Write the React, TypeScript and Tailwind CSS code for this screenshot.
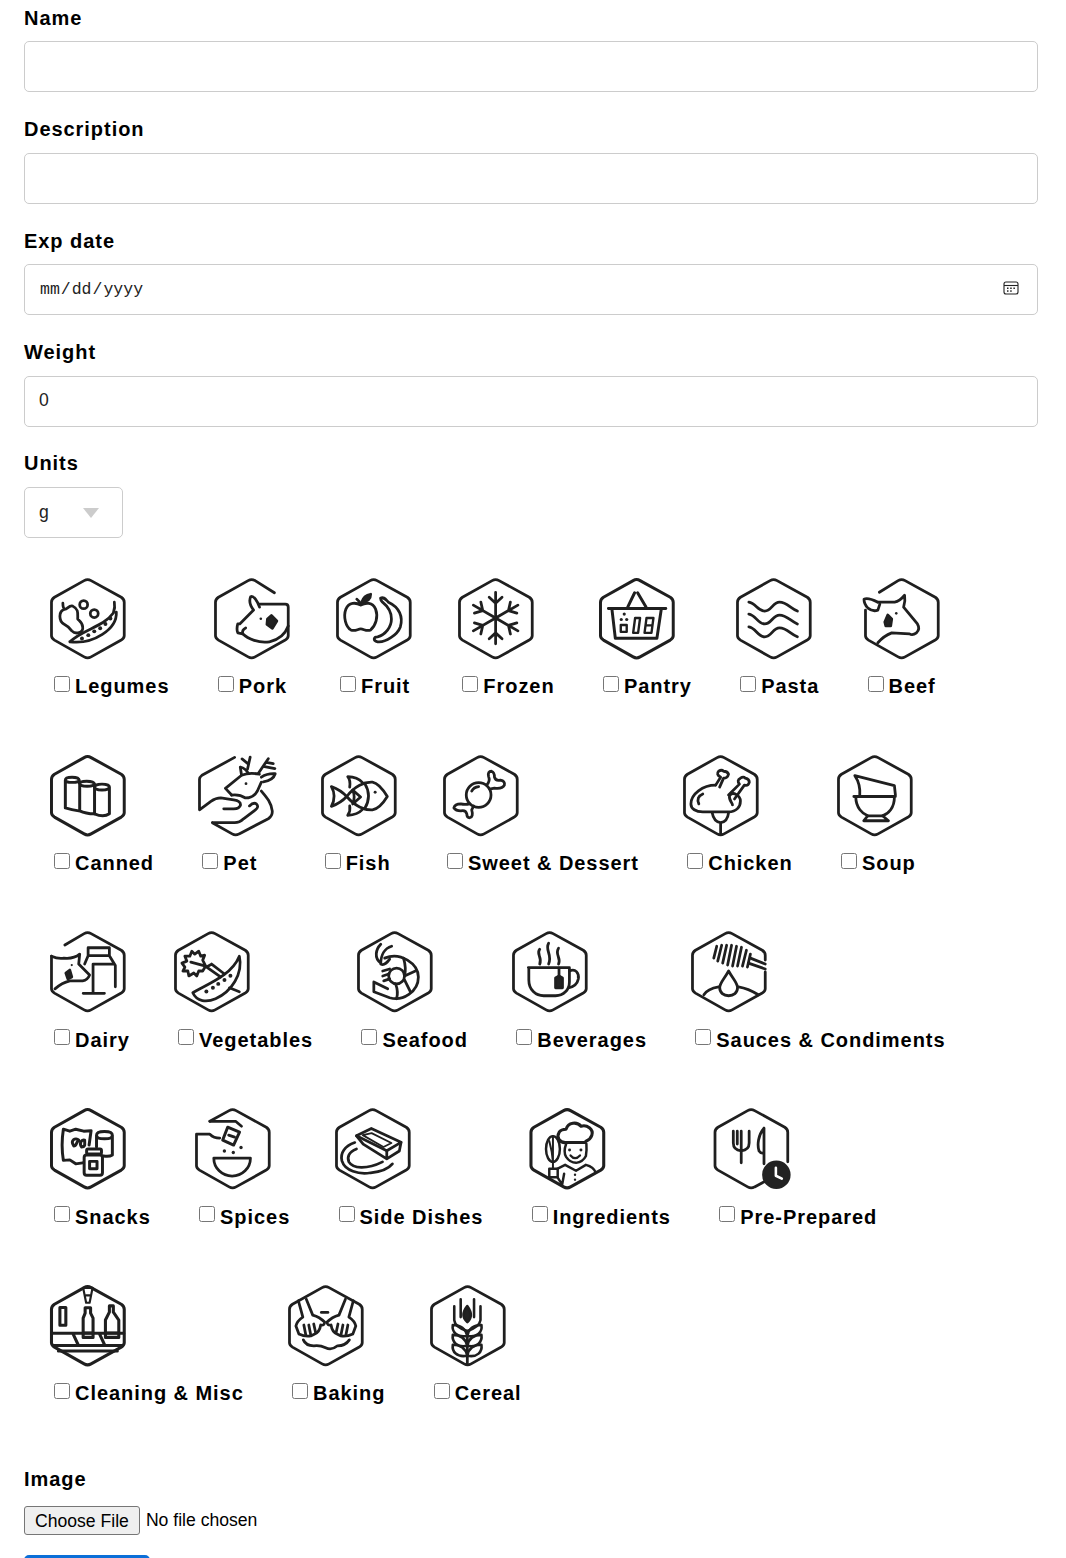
import React from "react";

const HEX = "M34.5 3.2 Q38 1.2 41.5 3.2 L72 20 Q75 22 75 25 V59 Q75 61.5 72 63.3 L41.5 80.3 Q38 82.3 34.5 80.3 L4.5 63.3 Q1.5 61.5 1.5 59 V25 Q1.5 22 4.5 20 Z";

function Ico({ hex = HEX, w = 2.8, dx = 0, children }: { hex?: string; w?: number; dx?: number; children: React.ReactNode }) {
  return (
    <svg width="78" height="84" viewBox={`${dx} -0.4 78.8 84.8`} fill="none" stroke="#1f1f1f" strokeWidth={w} strokeLinecap="round" strokeLinejoin="round" className="block overflow-visible">
      <path d={hex} />
      {children}
    </svg>
  );
}
const Dots = ({ p, r = 2 }: { p: number[][]; r?: number }) => (
  <g fill="#222" stroke="none">
    {p.map(([x, y], i) => (
      <circle key={i} cx={x} cy={y} r={r} />
    ))}
  </g>
);

const icons: Record<string, React.ReactNode> = {
  Legumes: (
    <Ico>
      <circle cx="34" cy="27.5" r="4" />
      <circle cx="44.7" cy="36.5" r="4" />
      <path d="M13 26 Q13 31 15 32 C8 34 9 44 14 47 C18 49 19 50 22 54 C26 58 34 56 33 50 C33 46 30 44 28 42 C28 36 29 32 23 29 C20 28 18 31 16 32" />
      <path d="M20 65 C34 52 54 50 64 36 Q66 30 65 25 M20 65 C44 68 68 52 67 35" />
      <Dots p={[[32.3, 61.7], [38.7, 58.3], [44.7, 54.5], [50.7, 51.3], [56, 47], [61, 41.5]]} />
    </Ico>
  ),
  Pork: (
    <Ico hex="M61 15.5 L41.5 3.2 Q38 1.2 34.5 3.2 L4.5 20 Q1.5 22 1.5 25 V59 Q1.5 61.5 4.5 63.3 L34.5 80.3 Q38 82.3 41.5 80.3 L72 63.3 Q75 61.5 75 59 V30 Q75 27 72 27 H46">
      <path d="M46 30 C44 24 40 18 37 19.5 C35 24 37 29 40 33 L26 47 H24 Q22.5 52 24 56 L29 57 C34 62 46 67 56 65 C65 63 72 57 75 49" />
      <path d="M29 57 Q28 53 32 51" />
      <circle cx="47.3" cy="41.7" r="1.3" fill="#222" stroke="none" />
      <path d="M58 38.5 L63.5 44 L59 51.5 L53.5 47.5 L54 42 Z" fill="#222" />
    </Ico>
  ),
  Fruit: (
    <Ico>
      <path d="M25 28 C20 25 13 25 10 32 C7 40 10 50 15 53 C19 55 22 52 25 52 C28 52 31 55 35 53 C40 49 43 40 40 32 C37 25 30 25 25 28 Z M25 28 Q24 24 21 22" />
      <path d="M26 25 Q28 18 35 17 Q35 24 26 25 Z" fill="#222" />
      <path d="M45 21 C48 19 50 22 53 25 C64 30 68 40 65 50 C62 58 50 66 42 65 C37 64 38 60 42 60 C50 58 56 50 56 42 C56 34 52 29 47 25 Q45 23 45 21 Z" />
    </Ico>
  ),
  Frozen: (
    <Ico>
      {[0, 60, 120, 180, 240, 300].map((a) => (
        <g key={a} transform={`rotate(${a} 38 41)`}>
          <path d="M38 41 V15 M31.5 20 L38 26 L44.5 20" strokeWidth="2.8" />
        </g>
      ))}
    </Ico>
  ),
  Pantry: (
    <Ico w={3}>
      <path d="M9.5 31.5 H67.5 M13 31.5 L16.5 61.5 H58.5 L63 31.5 M29 30 L36 15.5 M47.5 30 L39 15.5" />
      <rect x="22" y="48" width="6" height="7" strokeWidth="2.4" />
      <path d="M36.5 41 L41.5 41 L39.5 56 L34.5 56 Z" strokeWidth="2.4" />
      <path d="M48 41 L55 41 L53 56 L46 56 Z M47 48.5 H54" strokeWidth="2.4" />
      <Dots p={[[25.5, 37], [22.5, 42.5], [28, 42.5]]} r={1.6} />
    </Ico>
  ),
  Pasta: (
    <Ico>
      <path d="M13 25 C20 26 22 34 29 34 C36 34 37 25 44 25 C51 25 55 31 62 34" />
      <path d="M13 37 C20 38 22 47 29 47 C36 47 37 38 44 38 C51 38 55 44 62 47" />
      <path d="M13 50 C20 51 22 60 29 60 C36 60 37 51 44 51 C51 51 55 57 62 60" />
    </Ico>
  ),
  Beef: (
    <Ico hex="M15.5 15 L34.5 3.2 Q38 1.2 41.5 3.2 L72 20 Q75 22 75 25 V59 Q75 61.5 72 63.3 L41.5 80.3 Q38 82.3 34.5 80.3 L4.5 63.3 Q1.5 61.5 1.5 59 V33">
      <path d="M14 25 H31 Q36 24 41 18 Q42 24 40 30 L54 47 Q57 52 53 56 Q49 59 46 57 L28 56 Q20 59 14 66" />
      <path d="M14 25 Q4 20 0 22 Q0 27 4 31 Q9 35 14 33 L16 27" />
      <circle cx="32.6" cy="36.3" r="1.3" fill="#222" stroke="none" />
      <path d="M24 38 L28 42 L27 49 L22 49 L21 45 Z" fill="#222" />
    </Ico>
  ),
  Canned: (
    <Ico w={3}>
      <path d="M15.5 26 C15.5 22 29 22 29.5 26 C29.5 29 15.5 29 15.5 26 V54 Q22 56 29 57 M29.5 26 V29" />
      <path d="M30 30 C30 26 44 26 45 30 C45 33 30 33 30 30 V57 Q36 60 45 60 V30" />
      <path d="M45 33 C45 29 60 29 60 33 C60 37 45 37 45 33 M60 33 V60 Q54 64 45 60" />
    </Ico>
  ),
  Pet: (
    <Ico hex="M37 3 L4 21 Q1.5 23 1.5 25 V56 L13 47.5 Q18 44 23 44 L36 46 Q43 47 43 51 Q42 55 36 55 L26 55 M14.5 69 H37 Q42 69 46 65 L58 56 Q62 53 59 50 Q56 48 52 52 M14.5 69 L34.5 80.3 Q38 82.3 41.5 80.3 L71 65 Q75.5 62 75 57 C74 49 70 44 64 37">
      <path d="M34 41 L27.7 34.3 L44 21 Q52 18 62 20" />
      <path d="M34 41 Q42 40 48 44 Q56 44 60 37 L64 28" />
      <path d="M44 21 L42.7 12.7 Q48 14 51 19.3" />
      <path d="M64 23 Q70 19 78 19.5 Q76 26 66 27.7" />
      <path d="M50 15 L52.7 2.7 M50 9 L44.5 4.5 M61 19 L71 4.3 M66 12 L77.7 14.3 M69 8 L76 9.3" />
      <circle cx="48.5" cy="29.5" r="1.4" fill="#222" stroke="none" />
    </Ico>
  ),
  Fish: (
    <Ico>
      <path d="M26 42.5 C34 32 44 27.5 52 28 C58 29 63 36 67 42.5 C63 49 58 55 52 56 C44 56.5 34 52 26 42.5 Z" />
      <path d="M26 42.5 Q20 36 10.5 32.5 Q16 42 10.5 52.5 Q20 49 26 42.5" />
      <path d="M29 33 Q30 26 27 22.5 Q37 23 42 28.5 M29 52 Q30 57 27 61.5 Q37 61 42 55.5" />
      <path d="M44 29 Q52 42 44 55" />
      <path d="M32 36 L40 43 L32 50 Q35 43 32 36 Z" />
      <circle cx="54.7" cy="38.3" r="1.5" fill="#222" stroke="none" />
    </Ico>
  ),
  "Sweet & Dessert": (
    <Ico>
      <circle cx="36" cy="41" r="12.5" />
      <path d="M29 37 Q31 33 36 32.5" />
      <path d="M44 31 Q48 27 46 22 Q45 17 49 17 Q52 18 52 23 Q53 27 58 26 Q63 27 62 31 Q60 35 52 34 L47 35" />
      <path d="M27 50 Q22 51 18 50 Q12 50 11 54 Q13 57 18 57 Q23 56 24 60 Q24 64 27 64 Q31 63 29 56 L31 52" />
    </Ico>
  ),
  Chicken: (
    <Ico>
      <path d="M8 50 C8 40 20 31 33 31 M8 50 C8 55 13 58 20 58 H46 C54 58 58 53 58 47 C58 42 50 36 47 42 C46 46 50 49 50 51" />
      <path d="M16 50 Q13 43 20 40" />
      <path d="M33 31 L38 23 Q33 20 36 17 Q39 15 41 17 Q45 17 46 20 Q45 24 41 24 L37 33" />
      <path d="M46 41 L57 30 Q54 26 58 24 Q61 22 63 24 Q67 25 67 28 Q66 32 62 31 L52 45" />
      <path d="M29.5 59 Q31 68 38 69 Q45 68 46 59 M38 69 V80" />
    </Ico>
  ),
  Soup: (
    <Ico>
      <path d="M18 21.5 L58 31.5 L59 41 M18 21.5 Q24 30 23 42" />
      <path d="M17 42.5 H59 M19 43 C19 54 26 60 31 62 H46 C52 60 58 54 58 43" />
      <path d="M31 62 L27 67 H52 L46 62" />
    </Ico>
  ),
  Dairy: (
    <Ico hex="M15 14.7 L34.5 3.2 Q38 1.2 41.5 3.2 L72 20 Q75 22 75 25 V59 Q75 61.5 72 63.3 L41.5 80.3 Q38 82.3 34.5 80.3 L4.5 63.3 Q1.5 61.5 1.5 59 V26">
      <path d="M1.5 26 Q8 29 14 28 Q24 29 30 24 L29 34 L40 45 Q38 50 33 51 L20 51 Q12 53 5 59" />
      <path d="M16 43 L20 40 L22 47 L18 49 Z" fill="#222" />
      <circle cx="22" cy="35" r="1.1" fill="#222" stroke="none" />
      <path d="M38.5 25.5 V17.5 H60 V25.5 H38.5 L35 34 M60 25.5 L66 35.5 V57 M43.5 34 V62.5 M33.5 63.5 H55 M43.5 34 H65" />
    </Ico>
  ),
  Vegetables: (
    <Ico>
      <path d="M19 63 C32 55 58 46 66 26 C70 44 58 62 42 69 C33 73 23 72 19 63 Z" />
      <Dots p={[[32.7, 61.7], [39.3, 58], [44.7, 54], [51, 50], [57, 45.7]]} />
      <path d="M56 58 L66 62" />
      <path d="M33 37 L47 47 M38 34 L51 44 M33 37 L38 34" />
      <path d="M32 36 L29 30 L31 25 L27 26 L25 21 L21 24 L18 21 L16 26 L11 26 L13 31 L8 33 L11 37 L9 41 L14 41 L15 46 L20 43 L23 46 L25 41 L29 41 Z M17 32 L32 36" />
    </Ico>
  ),
  Seafood: (
    <Ico>
      <path d="M28 28 C44 21 62 34 62 47 C62 62 46 72 33 68 L17 62 V52 L31 59" />
      <circle cx="40" cy="46" r="8" />
      <path d="M24 33 C17 28 19 19 24 14 M24 34 C24 25 28 18 35 16 M24 34 Q28 36 33 29" />
      <path d="M26 41 L33 39 M26 46 L32 44 M27 51 L33 49 M47 28 Q50 38 48 46 M59 41 L48 46 M39 54 Q42 62 40 69 M48 50 L54 62" />
    </Ico>
  ),
  Beverages: (
    <Ico>
      <path d="M16.5 37.5 H58 M17 38 V50 C17 60 24 66 32 66 H44 C52 66 58 60 58 52 V38" />
      <path d="M58 41 C64 38 68 43 67 49 C66 54 62 57 57 58" />
      <path d="M28 19 C24 24 31 27 28 34 M37 13 C33 20 41 24 37 34 M47 18 C43 24 50 28 47 34" />
      <path d="M47.5 38 V47" />
      <path d="M44 48 L47.5 46 L51 48 V58 H44 Z" fill="#222" />
    </Ico>
  ),
  "Sauces & Condiments": (
    <Ico hex="M75 30 V25 Q75 22 72 20 L41.5 3.2 Q38 1.2 34.5 3.2 L4.5 20 Q1.5 22 1.5 25 V59 Q1.5 61.5 4.5 63.3 L34.5 80.3 Q38 82.3 41.5 80.3 L72 63.3 Q75 61.5 75 59 V42">
      <path d="M26 16 L23 28 M31 15 L27 31 M36 15 L32 33 M41 15 L37 35 M46 16 L42 36 M51 17 L47 36 M56 20 L52 36 M60 24 L57 37" />
      <path d="M60 28 L75 34 M58 33 L75 39" />
      <path d="M38 41 C33 50 29 53 29 58 C29 63 33 66 38 66 C43 66 47 63 47 58 C47 53 43 50 38 41 Z" />
      <path d="M13 65 C16 60 22 58 28 57 M48 57 C54 58 60 60 68 65" />
    </Ico>
  ),
  Snacks: (
    <Ico w={3}>
      <path d="M13.5 22 L20 24 L26 22 L34 24 L41.5 23.5 L39.5 38 M13.5 22 Q11 38 13.5 53.5 L20 53 L26 57 L33 56" />
      <path d="M24 39 C20 33 26 30 29 33 C26 36 27 39 24 39 Z M32 40 C29 36 32 32 35 33 C35 37 36 40 32 40 Z" />
      <path d="M47 28 C47 23 63 23 63 28 C63 33 47 33 47 28 M47 28 V40 M63 28 V48 Q60 50 54 49" />
      <rect x="37" y="42" width="15" height="5" rx="1.5" />
      <rect x="34.5" y="48" width="18.5" height="20.5" rx="2.5" />
      <rect x="40" y="54.5" width="7.5" height="7.5" />
    </Ico>
  ),
  Spices: (
    <Ico hex="M15 14 L34.5 3.2 Q38 1.2 41.5 3.2 L72 20 Q75 22 75 25 V59 Q75 61.5 72 63.3 L41.5 80.3 Q38 82.3 34.5 80.3 L4.5 63.3 Q1.5 61.5 1.5 59 V27 H15 Q19 31 25 31">
      <path d="M15 14 H41 L47 19" />
      <path d="M33 20 L45 25 L39 38 L28 33 Z" strokeWidth="3" />
      <path d="M34 28 L40 30" />
      <Dots p={[[29.7, 44], [38.7, 45.5], [46.5, 40.5]]} r={1.7} />
      <path d="M19 51.3 H56 A18.5 18 0 0 1 19 51.3 Z" />
    </Ico>
  ),
  "Side Dishes": (
    <Ico>
      <path d="M21.7 28.7 L36.7 21.3 L66.7 35.3 L52.3 43.7 Z" />
      <path d="M21.7 28.7 L28.5 37 L52.3 52 L65 44 L66.7 35.3 M52.3 43.7 V52" />
      <path d="M28 28 L37 26 L57 36 L49 40 Z" strokeWidth="1.8" />
      <path d="M20 35.5 C10 39 5 46 7 54 C10 64 24 68 36 66 C46 65 54 62 58 57" />
      <path d="M21.7 42 C14 45 12 50 14 55 C18 62 32 63 48 55" />
    </Ico>
  ),
  Ingredients: (
    <Ico w={3.1} dx={-1.5}>
      <path d="M37 35.5 C30 36 27 30 30 25 C32 22 35 22 37 22 C39 15 48 14 52 19 C58 17 65 22 63 28 C62 31 60 33 57 34 V35.5 H37 Z" />
      <path d="M37 37 Q34 45 37 50 Q41 56 47 56 Q54 55 57 49 Q58 43 57.5 37" strokeWidth="2.5" />
      <circle cx="40.5" cy="43" r="1.5" fill="#222" stroke="none" />
      <circle cx="52" cy="43" r="1.5" fill="#222" stroke="none" />
      <path d="M41.5 48.5 Q46 54 51 48.5" strokeWidth="2.3" />
      <ellipse cx="23.7" cy="42" rx="7" ry="13" strokeWidth="2.5" />
      <path d="M23.7 29 V62 M20 34 Q23 45 23.7 55" strokeWidth="2" />
      <rect x="20" y="62" width="8.5" height="8.5" strokeWidth="2.5" />
      <path d="M28 62 L36 58 L47 64 L57 58 Q65 60 67 66 M28.5 71 L33 78 L35 67" strokeWidth="2.5" />
      <Dots p={[[46, 68], [46, 73]]} r={1.2} />
    </Ico>
  ),
  "Pre-Prepared": (
    <Ico dx={1.5} hex="M55 73 L41.5 80.3 Q38 82.3 34.5 80.3 L4.5 63.3 Q1.5 61.5 1.5 59 V25 Q1.5 22 4.5 20 L34.5 3.2 Q38 1.2 41.5 3.2 L72 20 Q75 22 75 25 V55">
      <path d="M20 24 V36 Q20 43 28 44 Q36 43 36 36 V24 M28 24 V56 M24 24 V37" />
      <path d="M51 21 V57 M51 21 C45 28 44 38 46 44 Q48 47 51 46" />
      <circle cx="63.5" cy="68" r="13" fill="#222" stroke="#222" />
      <path d="M63 61 V69 L69 72" stroke="#fff" strokeWidth="2.6" />
    </Ico>
  ),
  "Cleaning & Misc": (
    <Ico w={3.1}>
      <path d="M2 49.3 H74.5 M3.5 61.7 H73 M8.5 67.3 H68 M23.3 50 L28.3 60.7 M50 50 L55 60.7" />
      <rect x="10" y="23.3" width="6" height="18" />
      <path d="M33.5 3.5 H43 L40 18.5 H36.5 Z M36.5 11 H40" strokeWidth="2.2" />
      <path d="M35.5 23.5 H41 V29 L43.5 34 V53.5 H33.5 V34 L35.5 29 Z" />
      <path d="M60 21.7 H64 V28 L69.5 36 V53.5 H56 V36 L60 28 Z" />
      <path d="M33.5 49 H43.5 M56 49 H69.5" />
    </Ico>
  ),
  Baking: (
    <Ico>
      <path d="M33.7 28.3 H40.3" />
      {[0, 1].map((m) => (
        <g key={m} transform={m ? "translate(76.5 0) scale(-1 1)" : undefined}>
          <path d="M10.5 16.5 L15 33 Q9 37 8 42 L11 50 M18.5 15 L25 31 Q32 33 37 38 Q37 42 33 41 Q32 48 27 50 L23 52 Q17 53 11 50" />
          <path d="M16 41 L18 51 M21 41 L23 51 M26 40 L28 49" />
        </g>
      ))}
      <path d="M15.5 56 Q18 62 26 62 Q32 61 38 64 Q44 67 50 62 Q58 62 62 56" />
    </Ico>
  ),
  Cereal: (
    <Ico>
      <path d="M37.7 54 V80" />
      <path d="M37.7 22 C33 28 32 33 37.7 38 C43 33 42 28 37.7 22 Z" fill="#222" />
      <path d="M24.5 22 V36 Q25 43 37.7 47 Q50 43 51 36 V22 M31 15 V33 M44.5 15 V33" strokeWidth="2.6" />
      {[43, 53, 63].map((y) => (
        <path key={y} d={`M37.7 ${y + 9} C27 ${y + 11} 22 ${y + 5} 23 ${y - 2} C31 ${y - 2} 36 ${y + 2} 37.7 ${y + 9} C39 ${y + 2} 44 ${y - 2} 52 ${y - 2} C53 ${y + 5} 48 ${y + 11} 37.7 ${y + 9} Z`} strokeWidth="2.6" />
      ))}
    </Ico>
  ),
};

const rows: string[][] = [
  ["Legumes", "Pork", "Fruit", "Frozen", "Pantry", "Pasta", "Beef"],
  ["Canned", "Pet", "Fish", "Sweet & Dessert", "Chicken", "Soup"],
  ["Dairy", "Vegetables", "Seafood", "Beverages", "Sauces & Condiments"],
  ["Snacks", "Spices", "Side Dishes", "Ingredients", "Pre-Prepared"],
  ["Cleaning & Misc", "Baking", "Cereal"],
];

const labelCls = "block h-[23px] text-[20px] leading-[23px] font-bold tracking-[0.95px] text-black";
const inputCls = "block w-[1014px] h-[51px] border border-[#ccc] rounded-[5px] px-[14px] text-[17.6px] text-[#222] bg-white";

export default function App() {
  return (
    <div className="h-[1558px] overflow-hidden bg-white pt-[7px] pl-[24px] [font-family:'Liberation_Sans',Arial,sans-serif]">
      <div className="flex flex-col gap-[26px]">
        <div>
          <label className={labelCls + " mb-[11.4px]"}>Name</label>
          <input type="text" className={inputCls} />
        </div>
        <div>
          <label className={labelCls + " mb-[11.4px]"}>Description</label>
          <input type="text" className={inputCls} />
        </div>
        <div>
          <label className={labelCls + " mb-[11.4px]"}>Exp date</label>
          <div className="relative w-[1014px]">
            <input type="date" className="block w-[1014px] h-[51px] border border-[#ccc] rounded-[5px] pl-[14px] pr-[16px] pt-[2px] text-[16.5px] text-[#222] bg-white [font-family:'Liberation_Mono',monospace] [&::-webkit-calendar-picker-indicator]:opacity-0" />
            <svg width="16" height="16" viewBox="0 0 16 16" fill="none" stroke="#222" strokeWidth="1.1" className="absolute left-[979px] top-[16px] pointer-events-none">
              <rect x="1" y="2" width="14" height="12" rx="2" />
              <path d="M1 5.5 H15" />
              <g fill="#222" stroke="none">
                <rect x="4" y="7.5" width="1.5" height="1.5" />
                <rect x="7.2" y="7.5" width="1.5" height="1.5" />
                <rect x="10.4" y="7.5" width="1.5" height="1.5" />
                <rect x="4" y="10.3" width="1.5" height="1.5" />
                <rect x="7.2" y="10.3" width="1.5" height="1.5" />
              </g>
            </svg>
          </div>
        </div>
        <div>
          <label className={labelCls + " mb-[11.4px]"}>Weight</label>
          <input type="number" defaultValue={0} className={inputCls + " pb-[1px]"} />
        </div>
        <div>
          <label className={labelCls + " -mt-[0.6px] mb-[12px]"}>Units</label>
          <div className="relative w-[99px]">
            <select className="block w-[99px] h-[51px] appearance-none border border-[#ccc] rounded-[5px] px-[14px] text-[17.6px] text-[#222] bg-white">
              <option>g</option>
            </select>
            <svg width="16" height="10" viewBox="0 0 16 10" className="absolute left-[59px] top-[21px] pointer-events-none">
              <path d="M0 0 H16 L8 10 Z" fill="#ccc" />
            </svg>
          </div>
        </div>
      </div>

      <div className="mt-[39px] pl-[26px] flex flex-col gap-[55.25px]">
        {rows.map((r, i) => (
          <div key={i} className="flex gap-[44.3px]">
            {r.map((name) => (
              <div key={name} className="min-w-[78px]">
                {icons[name]}
                <label className="mt-[14.5px] flex items-center h-[23px] text-[20px] leading-[23px] font-bold tracking-[0.95px] text-black whitespace-nowrap">
                  <input type="checkbox" className="w-4 h-4 m-0 ml-1 mr-[5px] -mt-[6px]" />
                  {name}
                </label>
              </div>
            ))}
          </div>
        ))}
      </div>

      <div className="mt-[62.5px]">
        <label className={labelCls + " mb-[15.5px]"}>Image</label>
        <input type="file" className="block h-[29px] w-[400px] text-[17.6px] text-black file:h-[29px] file:mr-[6px] file:px-[10px] file:bg-[#efefef] file:border file:border-[#767676] file:rounded-[3px] file:text-black" />
        <button className="block mt-[20px] w-[126px] h-[44px] rounded-[5px] bg-[#0b6fd8]" aria-label="Submit" />
      </div>
    </div>
  );
}
